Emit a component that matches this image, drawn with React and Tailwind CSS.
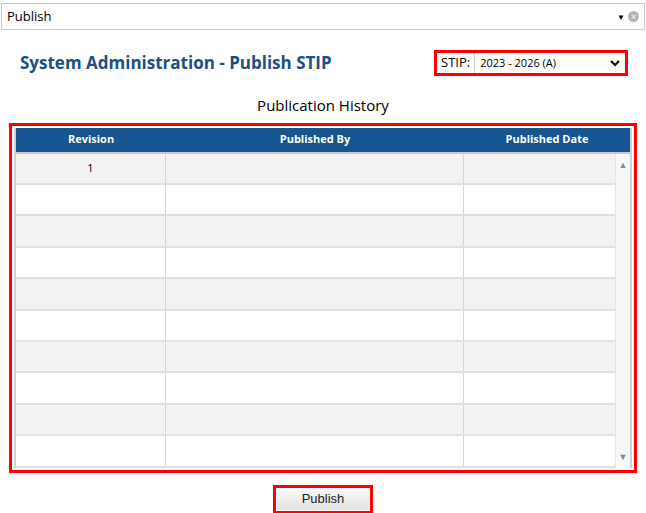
export default function App() {
  const rows = Array.from({ length: 10 }, (_, i) => i);
  return (
    <div className="w-[646px] h-[513px] bg-white relative overflow-hidden" style={{ fontFamily: '"Open Sans", "Noto Sans", sans-serif' }}>
      <div className="mx-[1px] mt-[3px] h-[27px] border border-[#c8c8c8] flex items-center px-[5px] text-[13px] text-black">
        <span className="flex-1">Publish</span>
        <span className="text-[8px] mr-[3px]">▼</span>
        <span className="w-[11px] h-[11px] rounded-full bg-[#b5b5b5] text-white text-[9px] leading-[11px] text-center">×</span>
      </div>
      <div className="flex items-center mt-[20px] pl-[20px] pr-[18px]">
        <div className="flex-1 text-[17px] font-bold text-[#1d4f84]">System Administration - Publish STIP</div>
        <div className="w-[194px] h-[26px] border-[3px] border-[#ff0000] flex items-center">
          <span className="text-[13px] px-[4px] text-black">STIP:</span>
          <div className="flex-1 h-full border-l border-[#ccc] flex items-center px-[5px] text-[11px]">
            <span className="flex-1">2023 - 2026 (A)</span>
            <svg width="10" height="7" viewBox="0 0 10 7"><path d="M1 1l4 4 4-4" stroke="#000" strokeWidth="2" fill="none"/></svg>
          </div>
        </div>
      </div>
      <div className="text-center text-[15px] mt-[18px] text-black">Publication History</div>
      <div className="mx-[9px] mt-[6px] h-[350px] border-[3px] border-[#ff0000] p-[2px] bg-white">
        <div className="h-full border-x-2 border-[#d0d0d0] flex flex-col">
          <div className="h-[26px] bg-[#175591] flex items-center text-white text-[11px] font-bold border-b-2 border-[#c9c9c9]">
            <div className="w-[150px] text-center">Revision</div>
            <div className="w-[298px] text-center">Published By</div>
            <div className="flex-1 text-center">Published Date</div>
          </div>
          <div className="flex flex-1 min-h-0">
            <div className="flex-1 flex flex-col">
              {rows.map((i) => (
                <div key={i} className={`flex-1 flex border-b-2 border-[#e0e0e0] ${i % 2 === 0 ? "bg-[#f2f2f2]" : "bg-white"}`}>
                  <div className="w-[150px] border-r border-[#d6d6d6] flex items-center justify-center text-[11px]">{i === 0 ? "1" : ""}</div>
                  <div className="w-[298px] border-r border-[#d6d6d6]"></div>
                  <div className="flex-1"></div>
                </div>
              ))}
            </div>
            <div className="w-[15px] border-l border-[#e5e5e5] bg-[#f7f7f7] flex flex-col justify-between items-center py-[4px] text-[9px] text-[#888]">
              <span>▲</span><span>▼</span>
            </div>
          </div>
        </div>
      </div>
      <div className="flex justify-center mt-[12px]">
        <div className="w-[100px] h-[29px] border-[3px] border-[#ff0000] p-[1px]">
          <div className="h-full bg-gradient-to-b from-[#fafafa] to-[#e0e0e0] flex items-center justify-center text-[13px] text-[#222]" style={{ fontFamily: '"Liberation Sans", Arial, sans-serif' }}>Publish</div>
        </div>
      </div>
    </div>
  );
}
